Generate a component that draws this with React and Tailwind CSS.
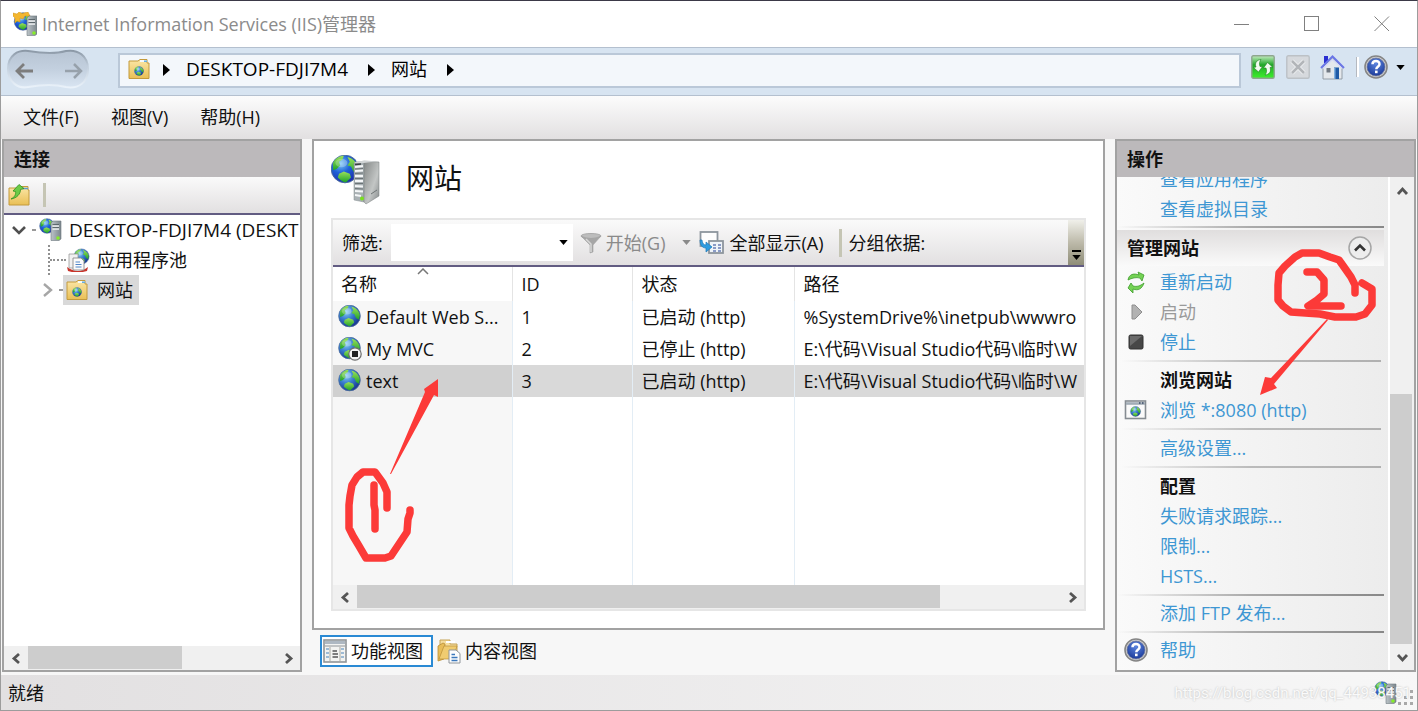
import React from "react";

const SANS = "font-['Open_Sans','Noto_Sans_CJK_SC',sans-serif]";

function Defs() {
  return (
    <svg className="absolute w-0 h-0" aria-hidden="true">
      <defs>
        <radialGradient id="sea" cx="0.35" cy="0.3" r="0.75">
          <stop offset="0" stopColor="#8fd0f6" />
          <stop offset="0.45" stopColor="#3a7fd0" />
          <stop offset="1" stopColor="#16318c" />
        </radialGradient>
        <radialGradient id="deepsea" cx="0.35" cy="0.3" r="0.75">
          <stop offset="0" stopColor="#7cc8f4" />
          <stop offset="0.45" stopColor="#1f62d8" />
          <stop offset="1" stopColor="#1a2aa8" />
        </radialGradient>
        <linearGradient id="land" x1="0" y1="0" x2="0" y2="1">
          <stop offset="0" stopColor="#9be05a" />
          <stop offset="1" stopColor="#1fa32a" />
        </linearGradient>
        <linearGradient id="folder" x1="0" y1="0" x2="0" y2="1">
          <stop offset="0" stopColor="#fbe7a8" />
          <stop offset="1" stopColor="#e9bf55" />
        </linearGradient>
        <linearGradient id="steel" x1="0" y1="0" x2="1" y2="0">
          <stop offset="0" stopColor="#bcc4c8" />
          <stop offset="1" stopColor="#7b868c" />
        </linearGradient>
        <linearGradient id="side" x1="0" y1="0" x2="1" y2="1">
          <stop offset="0" stopColor="#838786" />
          <stop offset="0.6" stopColor="#c3c6c5" />
          <stop offset="1" stopColor="#84898a" />
        </linearGradient>
        <linearGradient id="lime" x1="0" y1="0" x2="0" y2="1">
          <stop offset="0" stopColor="#c4ecc0" />
          <stop offset="0.4" stopColor="#22a82a" />
          <stop offset="1" stopColor="#3df02c" />
        </linearGradient>
        <radialGradient id="help" cx="0.5" cy="0.3" r="0.8">
          <stop offset="0" stopColor="#5d86e0" />
          <stop offset="1" stopColor="#12308f" />
        </radialGradient>
        <linearGradient id="navpad" x1="0" y1="0" x2="0" y2="1">
          <stop offset="0" stopColor="#b7c4d3" />
          <stop offset="0.5" stopColor="#c3d0df" />
          <stop offset="1" stopColor="#d9e5f2" />
        </linearGradient>
        <linearGradient id="navedge" x1="0" y1="0" x2="0" y2="1">
          <stop offset="0" stopColor="#8b98a6" />
          <stop offset="0.4" stopColor="#c0cddb" />
          <stop offset="1" stopColor="#eaf2fa" />
        </linearGradient>
      </defs>
    </svg>
  );
}

/* Globe centred on the origin with a radius of 12 units */
function GlobeShape({ deep }) {
  return (
    <g>
      <circle r="11.5" fill={deep ? "url(#deepsea)" : "url(#sea)"} stroke="#4a6c9c" strokeWidth="0.8" />
      <path d="M-10-5C-8-9-4-11-1-11L-2-8-5-6-4-3-7 0-10 1Z" fill="url(#land)" />
      <path d="M2-10C6-9 10-6 11-1L10 4 7 2 5-2 2-3 4-6Z" fill="url(#land)" />
      <path d="M-5 4-1 2 4 4 5 7 1 11C-2 11-4 9-6 7Z" fill="url(#land)" />
      <ellipse cx="-3" cy="-5" rx="5" ry="3.5" fill="#fff" opacity="0.25" />
    </g>
  );
}

function GlobeIcon({ stopped }) {
  return (
    <svg className="h-6 w-6 shrink-0" viewBox="0 0 24 24">
      <g transform="translate(11.5 11) scale(0.94)">
        <GlobeShape />
      </g>
      {stopped && (
        <g>
          <circle cx="17" cy="17" r="6.2" fill="#f4f4f4" stroke="#6c6c6c" strokeWidth="1.2" />
          <rect x="14" y="14" width="6" height="6" fill="#222" />
        </g>
      )}
    </svg>
  );
}

function ServerGlobe({ className = "h-6 w-6", star }) {
  return (
    <svg className={`shrink-0 ${className}`} viewBox="0 0 24 24">
      <g transform={star ? "translate(10 9.5) scale(0.76)" : "translate(8 8) scale(0.64)"}>
        <GlobeShape deep />
      </g>
      {star && <path d="M0 1 4 2 6 0 9 1.500 15 0 17 4 12 4 10 7 7 6 7 10 4 9 2 11 2 6 0 4Z" fill="#f3b62f" stroke="#cf9019" strokeWidth="0.500" />}
      <path d="M14 6 16 4H24V22L22 23.500H14Z" fill="url(#steel)" stroke="#6f7a80" strokeWidth="0.600" transform={star ? undefined : "translate(-2 -1)"} />
      <g transform={star ? undefined : "translate(-2 -1)"}>
        <path d="M15.500 9H22M15.500 12H22" stroke="#f2f5f6" strokeWidth="1.300" />
        <path d="M15.500 7.600H22M15.500 10.600H22" stroke="#4f5a60" strokeWidth="0.900" />
        <circle cx="21" cy="21" r="1.800" fill="#86ee28" />
      </g>
    </svg>
  );
}

function BigServer() {
  return (
    <svg className="h-[50px] w-[50px] shrink-0" viewBox="0 0 50 50">
      <g transform="translate(14 14) scale(1.2)">
        <GlobeShape deep />
      </g>
      <path d="M23 8 33 6 33 47 23 45Z" fill="#a9b1b4" stroke="#858c8f" strokeWidth="0.5" />
      <path d="M33 6 48 7V41L35 49 33 47Z" fill="url(#side)" stroke="#777c7d" strokeWidth="0.5" />
      <path d="M23 8 26 6H48L33 8Z" fill="#d0d4d5" />
      <path d="M24 12 32 11M24 16 32 15.5M24 21H32M24 26H32M24 31 32 31.5M24 36 32 36.5M24 40 30 41" stroke="#f4f6f7" strokeWidth="1.8" />
      <path d="M24 9.500 30 9" stroke="#3a3f41" strokeWidth="1.600" />
      <path d="M24 14 32 13.5M24 18.500 32 18M24 23.500H32M24 28.500H32M24 33.500 32 34" stroke="#6c7477" strokeWidth="1" />
      <circle cx="31" cy="43.500" r="2" fill="#79e01f" />
      <path d="M40 39 46 35" stroke="#6d7374" strokeWidth="1" />
    </svg>
  );
}

function FolderGlobe() {
  return (
    <svg className="h-6 w-6 shrink-0" viewBox="0 0 24 24">
      <path d="M2 4H11L13 2.500H20V6H22V21.500H2Z" fill="url(#folder)" stroke="#c39a3c" strokeWidth="1" />
      <path d="M13 4H19.500" stroke="#f6fafc" strokeWidth="2" />
      <path d="M17 4.200H20" stroke="#58a6dc" strokeWidth="1.4" />
      <g transform="translate(12 14) scale(0.4)">
        <GlobeShape />
      </g>
    </svg>
  );
}

function FolderUp() {
  return (
    <svg className="h-6 w-6 shrink-0" viewBox="0 0 24 24">
      <path d="M2 5H12L14 3.500H21V7H22V22H2Z" fill="url(#folder)" stroke="#c39a3c" strokeWidth="1" />
      <path d="M15 5.500H21" stroke="#5f9bc9" strokeWidth="1.5" />
      <path d="M4 16C8 14 9 11 8.500 8.500L6 8 12 1.500 17 5.500 13.500 6.500C13.500 11 10 15 4 16Z" fill="#6ccb47" stroke="#2f8f1f" strokeWidth="0.800" />
    </svg>
  );
}

function PoolIcon() {
  return (
    <svg className="h-6 w-6 shrink-0" viewBox="0 0 24 24">
      <g transform="translate(15.500 8.500) scale(0.66)">
        <GlobeShape />
      </g>
      <path d="M1 19Q12 27 22 19L21 23Q11 26 2 23Z" fill="#c8342b" />
      <path d="M3 6H12V20H3Z" fill="#f1f1f1" stroke="#9a9a9a" strokeWidth="0.8" />
      <path d="M7 10H15L18 13V22H7Z" fill="#fbfbfb" stroke="#8c8c8c" strokeWidth="0.9" />
      <path d="M9.500 14H14M9.500 16.500H15.500M9.500 19H15.500" stroke="#5085c8" strokeWidth="1.1" />
    </svg>
  );
}

function HelpIcon() {
  return (
    <svg className="h-6 w-6 shrink-0" viewBox="0 0 24 24">
      <circle cx="12" cy="12" r="11" fill="#d8d8d8" stroke="#858585" strokeWidth="1.600" />
      <circle cx="12" cy="12" r="9" fill="url(#help)" stroke="#6a7398" strokeWidth="0.8" />
      <path d="M8.500 9.300C8.500 5 15.500 5 15.500 9.200C15.500 11.800 12.300 11.800 12.300 14.200" fill="none" stroke="#fff" strokeWidth="2.500" />
      <rect x="11" y="15.600" width="2.600" height="2.600" fill="#fff" />
    </svg>
  );
}

function Triangle({ className = "" }) {
  return (
    <svg className={`shrink-0 ${className}`} viewBox="0 0 7 12" width="7" height="12">
      <path d="M0 0 7 6 0 12Z" fill="#000" />
    </svg>
  );
}

function DownMark({ className = "text-black" }) {
  return (
    <svg className={`shrink-0 ${className}`} viewBox="0 0 10 6" width="9" height="5">
      <path d="M0 0H10L5 6Z" fill="currentColor" />
    </svg>
  );
}

function Chevron({ dir }) {
  const d = {
    up: "M2 9 6.500 4 11 9",
    down: "M2 4 6.500 9 11 4",
    left: "M9 2 4 6.500 9 11",
    right: "M4 2 9 6.500 4 11",
  }[dir];
  return (
    <svg viewBox="0 0 13 13" width="13" height="13" className="text-[#555]">
      <path d={d} fill="none" stroke="currentColor" strokeWidth="2.800" />
    </svg>
  );
}

function HScroll({ thumb, label }) {
  return (
    <div className="flex h-6 shrink-0 bg-[#f0f0f0]" aria-label={label}>
      <button aria-label="向左滚动" className="flex w-6 items-center justify-center"><Chevron dir="left" /></button>
      <div className="flex-1 pb-px"><div className={`h-full bg-[#cdcdcd] ${thumb}`} /></div>
      <button aria-label="向右滚动" className="flex w-6 items-center justify-center"><Chevron dir="right" /></button>
    </div>
  );
}

function TitleBar() {
  return (
    <header className="flex h-[46px] shrink-0 items-center bg-white pl-3 text-[#8b8b8b]">
      <ServerGlobe star />
      <h1 className="ml-[5px] flex-1 pb-px text-[18px] font-normal">Internet Information Services (IIS)管理器</h1>
      <div className="flex text-[#808080]">
        <button aria-label="最小化" className="flex h-11 w-[70px] items-center justify-center">
          <svg width="16" height="16"><path d="M0 8.500H15" stroke="currentColor" /></svg>
        </button>
        <button aria-label="最大化" className="flex h-11 w-[70px] items-center justify-center">
          <svg width="16" height="16"><rect x="0.500" y="0.500" width="14" height="14" fill="none" stroke="currentColor" /></svg>
        </button>
        <button aria-label="关闭" className="flex h-11 w-[70px] items-center justify-center">
          <svg width="16" height="16"><path d="M0.500 0.500 15 15M15 0.500 0.500 15" stroke="currentColor" /></svg>
        </button>
      </div>
    </header>
  );
}

function AddressBar() {
  return (
    <nav className="flex h-[49px] shrink-0 items-start border-y border-[#b4c0cf] bg-[#d7e4f1] pl-[5px]" aria-label="地址">
      <div className="mt-px grid h-[42px] w-[84px] shrink-0">
        <svg viewBox="0 0 84 42" className="col-start-1 row-start-1 h-full w-full">
          <path d="M2 20C2 6 12 1 22 2C34 4 50 5 60 2C72 0 82 7 82 20C82 34 72 40 60 38C48 35 34 36 22 38C12 40 2 33 2 20Z" fill="url(#navpad)" stroke="url(#navedge)" strokeWidth="2" />
        </svg>
        <div className="col-start-1 row-start-1 flex items-center justify-between pl-2 pr-[6px] pt-[2px]">
          <button aria-label="后退" className="text-[#7d7d7d]">
            <svg width="20" height="18"><path d="M19 9H3M10 2 3 9 10 16" fill="none" stroke="currentColor" strokeWidth="2.800" /></svg>
          </button>
          <button aria-label="前进" className="text-[#97a1ab]">
            <svg width="20" height="18"><path d="M1 9H17M10 2 17 9 10 16" fill="none" stroke="currentColor" strokeWidth="2.500" /></svg>
          </button>
        </div>
      </div>
      <div className="ml-7 mt-[5px] flex h-[35px] min-w-0 flex-1 items-center border-2 border-[#bac8d8] bg-[#f3f7fb] pb-[3px] pl-[7px] text-[18px] text-black">
        <FolderGlobe />
        <Triangle className="ml-3 mt-[2px]" />
        <a href="#server" className="ml-4 text-[19px]">DESKTOP-FDJI7M4</a>
        <Triangle className="ml-5 mt-[2px]" />
        <a href="#sites" className="ml-4">网站</a>
        <Triangle className="ml-5 mt-[2px]" />
      </div>
      <div className="mt-[3px] flex h-8 items-center pl-[10px] pr-3">
        <button aria-label="刷新">
          <svg width="24" height="24" viewBox="0 0 24 24">
            <rect x="0.800" y="0.800" width="22.400" height="22.400" rx="1.500" fill="url(#lime)" stroke="#8ea68e" strokeWidth="1.400" />
            <path d="M10 4.500C5.500 5 3.500 8 5 12L2.500 12.500 7.500 17 11.500 11.500 9 11.500C8 8.500 8.500 6.500 10 4.500Z" fill="#f2fbf0" stroke="#1c7d20" strokeWidth="0.600" />
            <path d="M14 20C18.500 19.500 20.500 16.500 19 12.500L21.500 12 16.500 7.500 12.500 13 15 13C16 16 15.500 18 14 20Z" fill="#f2fbf0" stroke="#1c7d20" strokeWidth="0.600" />
          </svg>
        </button>
        <button aria-label="停止" className="ml-[11px]">
          <svg width="24" height="24" viewBox="0 0 24 24">
            <rect x="0.800" y="0.800" width="22.400" height="22.400" rx="1.500" fill="#d6d9dd" stroke="#bcc1c6" strokeWidth="1.400" />
            <path d="M6 6 18 18M18 6 6 18" stroke="#eceef0" strokeWidth="4.500" />
            <path d="M6 6 18 18M18 6 6 18" stroke="#b2b5b9" strokeWidth="2.500" />
          </svg>
        </button>
        <button aria-label="主页" className="ml-[10px]">
          <svg width="25" height="25" viewBox="0 0 25 25">
            <path d="M4 1H8V8H4Z" fill="#2a2ed0" />
            <path d="M3 12 12.500 3 22 12V24H3Z" fill="#e4e8ec" stroke="#8d96a0" strokeWidth="0.900" />
            <path d="M1 13 12.500 1.500 24 13" fill="none" stroke="#6a76e6" strokeWidth="2" />
            <path d="M3 13.500 12.500 4.500 22 13.500" fill="none" stroke="#d5daf6" strokeWidth="1.200" />
            <rect x="6.500" y="13" width="4" height="4.500" fill="#707882" />
            <rect x="14" y="12.500" width="5" height="11.500" fill="#1f5aa6" />
            <path d="M14 12.500H15.500V24H14Z" fill="#7faede" />
          </svg>
        </button>
        <span className="ml-[11px] h-5 w-[3px] border-l border-[#b5b9c0] bg-white" />
        <button aria-label="帮助" className="ml-[5px] flex items-center gap-2">
          <HelpIcon />
          <DownMark />
        </button>
      </div>
    </nav>
  );
}

function MenuBar() {
  return (
    <nav className="flex h-[43px] shrink-0 items-center gap-8 bg-linear-to-b from-[#fcfcfc] to-[#e2e0e1] pb-[2px] pl-[22px] text-[18px]" aria-label="菜单">
      <button>文件(F)</button>
      <button>视图(V)</button>
      <button>帮助(H)</button>
    </nav>
  );
}

function PanelTitle({ children, className }) {
  return (
    <h2 className={`flex h-9 shrink-0 items-center bg-[#bcb9bb] text-[18px] font-bold ${className}`}>{children}</h2>
  );
}

function Connections() {
  return (
    <aside className="flex w-[300px] shrink-0 flex-col border-2 border-[#a2a2a2] bg-white">
      <PanelTitle className="pl-[10px]">连接</PanelTitle>
      <div className="flex h-[38px] shrink-0 items-center border-b-2 border-[#625c82] bg-linear-to-b from-[#fafafa] to-[#e2e0e1] pl-[3px]">
        <button aria-label="创建新连接"><FolderUp /></button>
        <span className="ml-3 h-6 w-[3px] bg-[#c5c5b4]" />
      </div>
      <ul className="min-h-0 flex-1 overflow-hidden whitespace-nowrap text-[18px]">
        <li>
          <div className="flex h-[30px] items-center pl-2">
            <svg width="14" height="14" className="shrink-0"><path d="M1 4 7 10 13 4" fill="none" stroke="#505050" strokeWidth="2.600" /></svg>
            <span className="ml-[6px] mr-[3px] w-1 shrink-0 border-t-2 border-dotted border-[#999]" />
            <ServerGlobe />
            <a href="#server" className="ml-[6px] text-[19px]">DESKTOP-FDJI7M4 (DESKT</a>
          </div>
          <ul>
            <li className="flex h-[30px] items-center pl-11">
              <span className="h-full border-l-2 border-dotted border-[#909090]" />
              <span className="w-4 border-t-2 border-dotted border-[#909090]" />
              <PoolIcon />
              <a href="#pools" className="ml-[7px]">应用程序池</a>
            </li>
            <li className="flex h-[30px] items-center pl-[37px]">
              <svg width="14" height="14"><path d="M3 1 10 7 3 13" fill="none" stroke="#a6a6a6" strokeWidth="2.400" /></svg>
              <span className="ml-1 w-1 border-t-2 border-dotted border-[#999]" />
              <a href="#sites" className="flex h-[30px] items-center gap-2 bg-[#d9d9d9] pl-[2px] pr-[6px]">
                <FolderGlobe />
                网站
              </a>
            </li>
          </ul>
        </li>
      </ul>
      <HScroll thumb="w-[62%]" label="连接滚动条" />
    </aside>
  );
}

function FunnelIcon() {
  return (
    <svg width="22" height="22" viewBox="0 0 22 22" className="shrink-0">
      <ellipse cx="11" cy="4" rx="10" ry="2.500" fill="#bdbdbd" stroke="#ababab" />
      <path d="M1 4Q11 9 21 4L13 13V20L10 21V13Z" fill="#a6a6a6" stroke="#a2a2a2" strokeWidth="0.600" />
      <path d="M6 7 11 12V20" stroke="#d8d8d8" strokeWidth="1.500" fill="none" />
    </svg>
  );
}

function ShowAllIcon() {
  return (
    <svg width="26" height="26" viewBox="0 0 26 26" className="shrink-0">
      <rect x="1.500" y="2" width="17" height="14" fill="#fdfdfd" stroke="#8d959d" strokeWidth="1.800" />
      <rect x="10" y="11" width="14" height="12" fill="#eef3f8" stroke="#8d959d" strokeWidth="1.800" />
      <path d="M14 15H17M19 15H22M14 18H17M19 18H22M14 21H17M19 21H22" stroke="#6a7fb5" strokeWidth="1.500" />
      <path d="M1 10C1 15 3 18 7 18V22L13 17 7 12V15C5 15 3 13 3 10Z" fill="#2f9ce0" stroke="#1f78b8" strokeWidth="0.700" />
    </svg>
  );
}

const SITES = [
  { name: "Default Web S...", id: 1, state: "已启动 (http)", path: "%SystemDrive%\\inetpub\\wwwro" },
  { name: "My MVC", id: 2, state: "已停止 (http)", path: "E:\\代码\\Visual Studio代码\\临时\\W", stopped: true },
  { name: "text", id: 3, state: "已启动 (http)", path: "E:\\代码\\Visual Studio代码\\临时\\W", selected: true },
];

function SiteTable() {
  return (
    <table className="h-full w-full table-fixed border-collapse whitespace-nowrap text-left text-[18px]">
      <colgroup>
        <col className="w-[179px]" />
        <col className="w-[120px]" />
        <col className="w-[162px]" />
        <col />
      </colgroup>
      <thead>
        <tr className="h-[34px]">
          <th className="border-r border-[#e4e4e4] p-0 pl-2 font-normal">
            <div className="relative">
              名称
              <svg width="12" height="7" className="absolute -top-1 left-[76px]"><path d="M1 6 6 1 11 6" fill="none" stroke="#777" strokeWidth="1.500" /></svg>
            </div>
          </th>
          <th className="border-r border-[#e4e4e4] p-0 pl-[9px] font-normal">ID</th>
          <th className="border-r border-[#e4e4e4] p-0 pl-[9px] font-normal">状态</th>
          <th className="p-0 pl-[9px] font-normal">路径</th>
        </tr>
      </thead>
      <tbody>
        {SITES.map((s) => (
          <tr key={s.id} className={`h-8 ${s.selected ? "bg-[#d9d9d9]" : ""}`}>
            <td className={`border-r border-[#e3edf5] p-0 pl-[5px] ${s.selected ? "bg-[#d0d0d0]" : "bg-[#f7f7f7]"}`}>
              <div className="flex items-center gap-1"><GlobeIcon stopped={s.stopped} />{s.name}</div>
            </td>
            <td className="border-r border-[#e3edf5] p-0 pl-[9px]">{s.id}</td>
            <td className="border-r border-[#e3edf5] p-0 pl-[9px]">{s.state}</td>
            <td className="overflow-hidden p-0 pl-[9px]">{s.path}</td>
          </tr>
        ))}
        <tr>
          <td className="border-r border-[#e3edf5] bg-[#f7f7f7]" />
          <td className="border-r border-[#e3edf5]" />
          <td className="border-r border-[#e3edf5]" />
          <td />
        </tr>
      </tbody>
    </table>
  );
}

function Sites() {
  return (
    <main className="flex min-w-0 flex-1 flex-col">
      <section className="flex min-h-0 flex-1 flex-col border-2 border-[#a2a2a2] bg-white px-[17px] pb-[17px]">
        <div className="flex h-[77px] shrink-0 items-center">
          <BigServer />
          <h2 className="ml-[25px] pb-1 text-[28px]">网站</h2>
        </div>
        <div className="flex min-h-0 flex-1 flex-col border-2 border-[#e6e6e6]">
          <div className="flex h-[47px] shrink-0 items-center border-b-2 border-[#625c82] bg-linear-to-b from-[#fafafa] to-[#e2e0e1] text-[18px]">
            <label htmlFor="filter" className="ml-[9px]">筛选:</label>
            <div className="ml-2 flex h-[37px] w-[182px] shrink-0 items-center bg-white pr-[5px]">
              <input id="filter" className="h-full min-w-0 flex-1 bg-transparent px-2 outline-none" />
              <button aria-label="筛选历史"><DownMark /></button>
            </div>
            <button className="ml-[7px] flex items-center gap-1 text-[#8a8a8a]"><FunnelIcon />开始(G)</button>
            <button aria-label="开始选项" className="ml-[17px]"><DownMark className="text-[#8a8a8a]" /></button>
            <button className="ml-2 flex items-center gap-1"><ShowAllIcon />全部显示(A)</button>
            <span className="ml-4 h-7 w-[3px] bg-[#c5c5b4]" />
            <span className="ml-[6px]">分组依据:</span>
            <button aria-label="更多" className="ml-auto flex h-full w-4 flex-col items-center justify-end gap-[3px] bg-linear-to-b from-[#f0f0ea] via-[#bdbaaa] to-[#8f8d78] pb-[5px]">
              <span className="h-[2px] w-[9px] bg-black" />
              <DownMark />
            </button>
          </div>
          <div className="min-h-0 flex-1 overflow-hidden"><SiteTable /></div>
          <HScroll thumb="w-[83%]" label="站点滚动条" />
        </div>
      </section>
      <div className="flex h-[42px] shrink-0 items-center gap-1 pl-2 text-[18px]">
        <button className="flex h-8 items-center gap-1 border-2 border-[#2a8ad4] bg-white pl-px pr-2">
          <svg width="24" height="24" viewBox="0 0 24 24">
            <rect x="1" y="1" width="22" height="22" fill="#f3f3f1" stroke="#8f9498" strokeWidth="1.600" />
            <rect x="2" y="2" width="20" height="3" fill="#aeb8c2" />
            <path d="M2 7H22" stroke="#8f9498" />
            <path d="M7 8V22M17 8V22" stroke="#c3c3bd" strokeWidth="1.500" />
            <path d="M3 10H6M3 14H6M3 18H6M18 10H21M18 14H21M18 18H21" stroke="#83a9cc" strokeWidth="1.500" />
            <path d="M9.500 12H14M9.500 15H15M9.500 18H15" stroke="#555" strokeWidth="1.500" />
          </svg>
          功能视图
        </button>
        <button className="flex h-8 items-center gap-1">
          <svg width="24" height="26" viewBox="0 0 24 26">
            <path d="M3 2H13V6H20V17H3Z" fill="#f6dfa0" stroke="#c5a254" />
            <path d="M9 4H18" stroke="#fff" strokeWidth="2" />
            <path d="M1 8 6 5 8 6 7 21 1 23Z" fill="#e8bd58" stroke="#b98e35" strokeWidth="0.800" />
            <path d="M7 8H20L16 21H2Z" fill="#f0cc70" stroke="#b98e35" strokeWidth="0.700" />
            <path d="M12 12H19L23 15.500V25H12Z" fill="#fdfdfd" stroke="#8f959b" />
            <path d="M14.500 16.500H18M14.500 19.500H20.500M14.500 22.500H20.500" stroke="#3b78bd" strokeWidth="1.500" />
          </svg>
          内容视图
        </button>
      </div>
    </main>
  );
}

function Action({ icon, children, disabled }) {
  return (
    <div className="flex h-[30px] items-center pl-[7px]">
      <span className="flex w-9 shrink-0 items-center">{icon}</span>
      {disabled ? (
        <button disabled className="text-[#9a9a9a]">{children}</button>
      ) : (
        <a href="#action" className="text-[#3e97d3]">{children}</a>
      )}
    </div>
  );
}

function Heading({ children }) {
  return <h3 className="flex h-[30px] items-center pl-[43px] font-bold">{children}</h3>;
}

function InnerRule() {
  return (
    <div className="flex h-2 items-center pl-1 pr-[7px]">
      <span className="h-[2px] flex-1 bg-linear-to-r from-transparent via-[#bbb] to-[#b0b0b0]" />
    </div>
  );
}

function OuterRule({ className = "h-[7px]" }) {
  return (
    <div className={`flex items-center pr-1 ${className}`}>
      <span className="h-[2px] flex-1 bg-linear-to-r from-transparent via-[#aaa] to-[#888]" />
    </div>
  );
}

function Actions() {
  return (
    <aside className="flex w-[301px] shrink-0 flex-col border-2 border-[#a2a2a2]">
      <PanelTitle className="pl-[10px]">操作</PanelTitle>
      <div className="flex min-h-0 flex-1 overflow-hidden bg-linear-to-r from-[#fafafa] to-[#ebebeb] text-[18px]">
        <div className="min-w-0 flex-1">
          <div className="-mt-[13px]">
            <Action>查看应用程序</Action>
            <Action>查看虚拟目录</Action>
            <OuterRule className="h-[6px]" />
            <div className="mb-px mr-1 flex h-9 items-center justify-between bg-linear-to-b from-[#e0dede] to-[#fafafa] pl-[10px] pr-3">
              <h3 className="font-bold">管理网站</h3>
              <button aria-label="折叠">
                <svg width="24" height="24" viewBox="0 0 24 24">
                  <circle cx="12" cy="12" r="11" fill="#ededed" stroke="#a6a6a6" strokeWidth="1.500" />
                  <path d="M7 14.500 12 9.500 17 14.500" fill="none" stroke="#333" strokeWidth="2.600" />
                </svg>
              </button>
            </div>
            <Action
              icon={
                <svg width="24" height="24" viewBox="0 0 24 24">
                  <path d="M4 10C5 4 10 3 15 5L14 2 20 5 18 11 16 8C12 7 8 8 4 10Z" fill="#74d254" stroke="#3d9c2b" strokeWidth="0.800" />
                  <path d="M20 13C18 19 14 21 9 19L9 23 4 18 7 13 9 16C13 17 16 16 20 13Z" fill="#74d254" stroke="#3d9c2b" strokeWidth="0.800" />
                </svg>
              }
            >
              重新启动
            </Action>
            <Action
              disabled
              icon={<svg width="24" height="24" viewBox="0 0 24 24"><path d="M8 5H11L18 12 11 19H8Z" fill="#b2b2b2" stroke="#8e8e8e" /></svg>}
            >
              启动
            </Action>
            <Action
              icon={
                <svg width="24" height="24" viewBox="0 0 24 24">
                  <rect x="5" y="5" width="14" height="14" rx="1.500" fill="#474747" stroke="#333" />
                  <path d="M6 6H18L6 16Z" fill="#6b6b6b" />
                </svg>
              }
            >
              停止
            </Action>
            <InnerRule />
            <Heading>浏览网站</Heading>
            <Action
              icon={
                <svg width="24" height="24" viewBox="0 0 24 24">
                  <rect x="1.500" y="3" width="20" height="17.500" fill="#fafafa" stroke="#868c92" strokeWidth="1.600" />
                  <path d="M2 5.500H21" stroke="#a2acb6" strokeWidth="2.600" />
                  <path d="M15 5H16.500M18 5H19.500" stroke="#3d4d68" strokeWidth="1.500" />
                  <g transform="translate(11.500 13.500) scale(0.440)"><GlobeShape /></g>
                </svg>
              }
            >
              浏览 *:8080 (http)
            </Action>
            <InnerRule />
            <Action>高级设置...</Action>
            <InnerRule />
            <Heading>配置</Heading>
            <Action>失败请求跟踪...</Action>
            <Action>限制...</Action>
            <Action>HSTS...</Action>
            <OuterRule />
            <Action>添加 FTP 发布...</Action>
            <OuterRule />
            <Action icon={<HelpIcon />}>帮助</Action>
          </div>
        </div>
        <div className="flex w-[26px] shrink-0 flex-col border-l-2 border-white bg-[#f0f0f0]">
          <button aria-label="向上滚动" className="flex h-7 items-center justify-center"><Chevron dir="up" /></button>
          <div className="flex flex-1 flex-col justify-end"><div className="mr-[2px] h-[57%] bg-[#cdcdcd]" /></div>
          <button aria-label="向下滚动" className="flex h-[26px] items-center justify-center"><Chevron dir="down" /></button>
        </div>
      </div>
    </aside>
  );
}

function StatusBar() {
  return (
    <footer className="relative mt-[3px] flex h-[35px] shrink-0 items-center justify-between bg-linear-to-r from-[#e2e0e1] to-[#f7f7f7] pl-[7px] text-[18px]">
      <span>就绪</span>
      <div className="flex items-end pr-1">
        <ServerGlobe />
        <svg width="15" height="15" viewBox="0 0 15 15" fill="#a9a9a9">
          <path d="M12 0H15V3H12ZM6 6H9V9H6ZM12 6H15V9H12ZM0 12H3V15H0ZM6 12H9V15H6ZM12 12H15V15H12Z" />
        </svg>
      </div>
      <span className="absolute right-[6px] top-[6px] font-['Roboto',sans-serif] text-[15px] leading-6 text-[#fafafa] [text-shadow:0_0_2px_#b4b4b4]">
        https://blog.csdn.net/qq_44938451
      </span>
    </footer>
  );
}

function Annotations() {
  return (
    <>
      <svg className="pointer-events-none absolute left-[339px] top-[369px]" width="110" height="200" viewBox="340 370 110 200" aria-hidden="true">
        <g fill="none" stroke="#fc3a38" strokeWidth="7.500" strokeLinecap="round" strokeLinejoin="round">
          <path d="M387 508V492L383 483 375 472H363L357 477 352 485 350 496 349 505V528L353 536 359 546 366 558H385L391 556 401 541 407 532 408 519 410 513V510" />
          <path d="M374 485V505L375 510V529" />
        </g>
        <path d="M390 474 425 392 424 389 438 379V397L434 395 391 474Z" fill="#fc3a38" />
      </svg>
      <svg className="pointer-events-none absolute right-[37px] top-[244px]" width="125" height="155" viewBox="1255 245 125 155" aria-hidden="true">
        <g fill="none" stroke="#fc3a38" strokeWidth="7.500" strokeLinecap="round" strokeLinejoin="round">
          <path d="M1355 293V285L1351 277 1344 267 1339 260 1330 257 1319 253H1302L1295 257 1285 266 1279 273 1278 285V300L1283 306 1291 312 1320 314 1335 317H1356L1365 314 1372 305V289L1362 283" />
          <path d="M1307 272H1317L1324 280V294L1317 300 1308 306H1341" />
        </g>
        <path d="M1327 319 1271 378 1265 377 1260 395 1277 388 1274 384 1328 320Z" fill="#fc3a38" />
      </svg>
    </>
  );
}

export default function App() {
  return (
    <div className={`relative flex h-screen min-h-[700px] flex-col overflow-hidden border border-t-[#3b3947] border-[#9c9c9c] bg-[#f7f7f7] leading-6 text-[#111] ${SANS}`}>
      <Defs />
      <TitleBar />
      <AddressBar />
      <MenuBar />
      <div className="flex min-h-0 flex-1 gap-[10px] px-px">
        <Connections />
        <Sites />
        <Actions />
      </div>
      <StatusBar />
      <Annotations />
    </div>
  );
}
